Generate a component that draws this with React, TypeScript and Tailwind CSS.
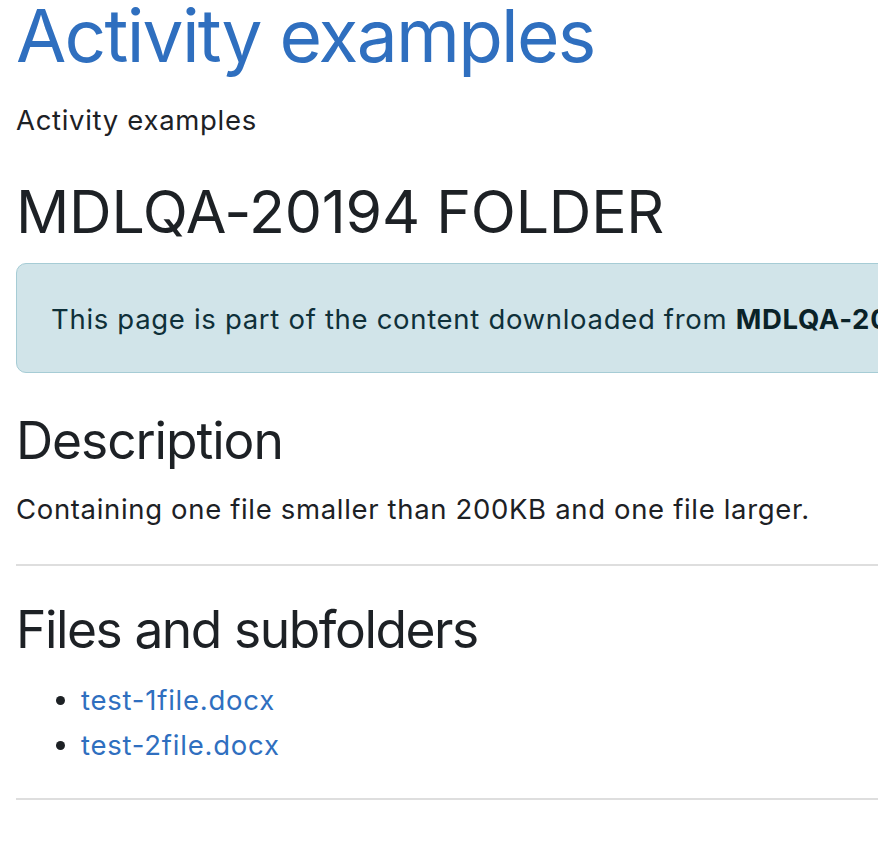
export default function App() {
  return (
    <div className="w-[878px] h-[844px] overflow-hidden bg-white" style={{ fontFamily: 'Inter, "Noto Sans", sans-serif' }}>
      <div className="w-[1300px] pl-4 text-[#1d2125]">
        <h1 className="text-[73px] leading-[88px] -mt-[8px] tracking-[-0.024em] text-[#2f6fbf] font-normal">Activity examples</h1>
        <p className="text-[27.5px] leading-[41px] tracking-[0.025em] mt-[20px]">Activity examples</p>
        <h2 className="text-[59px] leading-[71px] tracking-[-0.004em] mt-[35px] font-normal">MDLQA-20194 FOLDER</h2>
        <div className="mt-[16px] h-[110px] flex items-center pt-[2px] px-[34px] rounded-[10px] border border-[#a6ccd5] bg-[#d1e4e9] text-[#0f3039] text-[27.5px] leading-[41px] tracking-[0.025em]">
          <span className="whitespace-nowrap">
            This page is part of the content downloaded from <strong className="font-bold text-[#0a2228]">MDLQA-20194 course</strong>
          </span>
        </div>
        <h3 className="text-[51.5px] leading-[62px] tracking-[-0.021em] mt-[36px] font-normal">Description</h3>
        <p className="text-[27.5px] leading-[41px] tracking-[0.024em] mt-[18px]">Containing one file smaller than 200KB and one file larger.</p>
        <hr className="mt-[34px] border-0 h-[2px] bg-[#dedede]" />
        <h3 className="text-[51.5px] leading-[62px] tracking-[-0.028em] mt-[32px] font-normal">Files and subfolders</h3>
        <ul className="mt-[18px] pl-[65px] list-disc text-[27.5px] leading-[45px] tracking-[0.028em]">
          <li>
            <a className="text-[#2f6fbf]" href="#">test-1file.docx</a>
          </li>
          <li>
            <a className="text-[#2f6fbf]" href="#">test-2file.docx</a>
          </li>
        </ul>
        <hr className="mt-[30px] border-0 h-[2px] bg-[#dedede]" />
      </div>
    </div>
  );
}
